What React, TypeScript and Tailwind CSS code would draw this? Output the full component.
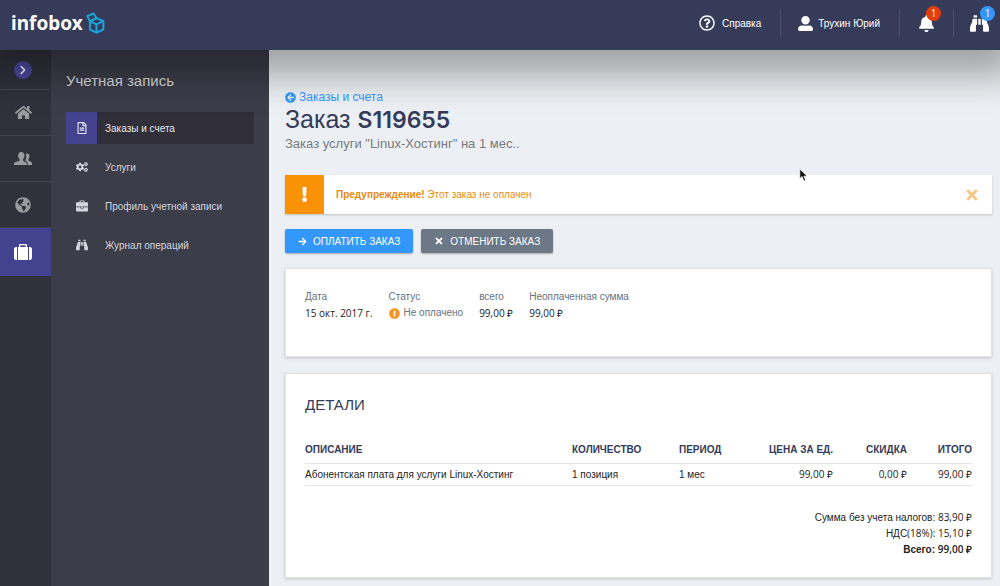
import React from "react"
import {
  FaArrowCircleLeft,
  FaArrowRight,
  FaBell,
  FaBinoculars,
  FaChevronRight,
  FaCogs,
  FaExclamation,
  FaExclamationCircle,
  FaGlobeAmericas,
  FaHome,
  FaRegFileAlt,
  FaRegQuestionCircle,
  FaTimes,
  FaUserAlt,
} from "react-icons/fa"

type IconProps = { className?: string }

const UsersIcon = ({ className }: IconProps) => (
  <svg viewBox="0 0 18 14" className={className} fill="currentColor">
    <path d="M13 1.500c1.700 0 2.600 1.200 2.500 2.900-.1 1.300-.6 2.100-1.100 2.700v1.400l2.600 1.300c.7.400 1 .9 1 1.700V13h-4.500v-1.800c0-1-.5-1.700-1.400-2.200l-1-.6c.8-1 1.200-2.300 1.200-3.800 0-1-.3-1.900-.8-2.600.4-.3.900-.5 1.500-.5Z" />
    <path d="M7.300 0c2 0 3.200 1.300 3.200 3.400 0 1.700-.7 3-1.500 3.800v1.500l2.800 1.500c.7.400 1 .9 1 1.700V13H0v-1.100c0-.8.300-1.300 1-1.700l4.600-1.500V7.200C4.700 6.400 4.100 5.100 4.100 3.400 4.100 1.300 5.300 0 7.300 0Z" />
  </svg>
)

const SuitcaseIcon = ({ className }: IconProps) => (
  <svg viewBox="0 0 18 16" className={className} fill="currentColor">
    <path d="M3 3v13h-.8A2.200 2.200 0 0 1 0 13.800V5.200A2.200 2.200 0 0 1 2.200 3ZM15 3h.8A2.200 2.200 0 0 1 18 5.200v8.600a2.200 2.200 0 0 1-2.200 2.200H15Z" />
    <path
      fillRule="evenodd"
      d="M4 3h1V1.200C5 .5 5.500 0 6.200 0h5.600c.7 0 1.200.5 1.200 1.200V3h1v13H4ZM6.300 3h5.400V1.300H6.300Z"
    />
  </svg>
)

const BriefcaseIcon = ({ className }: IconProps) => (
  <svg viewBox="0 0 14 13" className={className} fill="currentColor">
    <path
      fillRule="evenodd"
      d="M4 2V1c0-.5.4-1 1-1h4c.6 0 1 .5 1 1v1h2.700C13.500 2 14 2.500 14 3.300V7H0V3.300C0 2.500.5 2 1.300 2ZM5.200 2h3.600v-.9H5.200Z"
    />
    <path d="M0 8h5v1.500h4V8h6-1v3.700c0 .8-.5 1.300-1.300 1.300H1.300C.5 13 0 12.500 0 11.700ZM6 7.500h2v1.200H6Z" />
  </svg>
)

const railItems = [
  { label: "Главная", icon: FaHome, active: false, size: "size-[17px]" },
  { label: "Пользователи", icon: UsersIcon, active: false, size: "h-[14px] w-[18px]" },
  { label: "Домены", icon: FaGlobeAmericas, active: false, size: "size-4" },
  { label: "Учетная запись", icon: SuitcaseIcon, active: true, size: "h-4 w-[18px]" },
]

const menuItems = [
  { label: "Заказы и счета", icon: FaRegFileAlt, active: true },
  { label: "Услуги", icon: FaCogs, active: false },
  { label: "Профиль учетной записи", icon: BriefcaseIcon, active: false },
  { label: "Журнал операций", icon: FaBinoculars, active: false },
]

const Logo = () => (
  <a href="#" className="flex items-center gap-[3px] text-white">
    <span className="font-['Noto_Sans',sans-serif] text-[19px] leading-7 font-bold">infobox</span>
    <svg
      viewBox="0 0 58 66"
      className="h-[22px] w-[19px]"
      fill="none"
      stroke="#18a5dc"
      strokeWidth="6"
      strokeLinejoin="round"
    >
      <path d="M32 18 53 27 53 53 32 62 12 53 12 28Z" />
      <path d="M12 28 32 37 53 27M32 37V62" />
      <path d="M12 28 4 12 23 4 32 18Z" />
    </svg>
  </a>
)

const Header = () => (
  <header className="relative z-10 flex h-[50px] shrink-0 items-center justify-between bg-[#353b59] pb-1 pl-[11px] text-[10px] text-white shadow-[0_10px_36px_16px_rgba(0,0,0,0.32)]">
    <Logo />
    <div className="flex h-7 items-center">
      <a href="#" className="flex items-center gap-[7px] pr-[19px]">
        <FaRegQuestionCircle className="size-4" />
        Справка
      </a>
      <a href="#" className="flex h-full items-center gap-[5px] border-l border-[#4b5170] pr-[19px] pl-[17px]">
        <FaUserAlt className="size-[15px]" />
        Трухин Юрий
      </a>
      <button aria-label="Уведомления" className="relative h-full border-l border-[#4b5170] px-[18px]">
        <FaBell className="size-[17px]" />
        <span className="absolute -top-[3px] left-[26px] flex size-[15px] items-center justify-center rounded-full bg-[#e43c0b] font-['Open_Sans',sans-serif] text-[10px]">
          1
        </span>
      </button>
      <button aria-label="Журнал операций" className="relative h-full border-l border-[#4b5170] pr-[11px] pl-4">
        <FaBinoculars className="size-[19px]" />
        <span className="absolute -top-[3px] left-[26px] flex size-[15px] items-center justify-center rounded-full bg-[#3397fb] font-['Open_Sans',sans-serif] text-[10px]">
          1
        </span>
      </button>
    </div>
  </header>
)

const Rail = () => (
  <nav className="w-[51px] shrink-0 bg-[#2f313b] text-[#9a9ba0]">
    <div className="flex h-10 items-center justify-center border-b border-[#42444d] pr-[5px]">
      <button
        aria-label="Развернуть меню"
        className="flex size-[18px] items-center justify-center rounded-full bg-[#4a49a0] text-white"
      >
        <FaChevronRight className="size-[10px]" />
      </button>
    </div>
    {railItems.map(({ label, icon: Icon, active, size }) => (
      <a
        key={label}
        href="#"
        aria-label={label}
        className={
          active
            ? "flex h-12 items-center justify-center bg-[#42428e] pr-[5px] text-white"
            : "flex h-[46px] items-center justify-center border-b border-[#42444d] pr-[5px]"
        }
      >
        <Icon className={size} />
      </a>
    ))}
  </nav>
)

const Sidebar = () => (
  <aside className="w-[218px] shrink-0 bg-[#3b3d49] px-[15px] pt-5">
    <h2 className="text-[15px] leading-[22px] text-[#d6d7da]">Учетная запись</h2>
    <ul className="mt-5 space-y-[7px]">
      {menuItems.map(({ label, icon: Icon, active }) => (
        <li key={label}>
          <a
            href="#"
            className={
              active
                ? "flex h-8 items-center bg-[#302f39] text-[10px] text-[#e4e4ea]"
                : "flex h-8 items-center text-[10px] text-[#d6d6de]"
            }
          >
            <span
              className={
                active
                  ? "mr-2 flex h-full w-[31px] items-center justify-center bg-[#42428e]"
                  : "mr-2 flex h-full w-[31px] items-center justify-center"
              }
            >
              <Icon className="size-3" />
            </span>
            {label}
          </a>
        </li>
      ))}
    </ul>
  </aside>
)

const Warning = () => (
  <div
    role="alert"
    className="mt-[21px] flex h-[39px] items-center bg-white text-[10px] text-[#e8890f] shadow-[0_1px_2px_rgba(0,0,0,0.2)]"
  >
    <span className="flex h-full w-[39px] items-center justify-center bg-[#fb9104] text-white">
      <FaExclamation className="size-[15px]" />
    </span>
    <p className="flex-1 pl-3">
      <b>Предупреждение!</b> Этот заказ не оплачен
    </p>
    <button aria-label="Закрыть" className="px-3 text-[#f7c788]">
      <FaTimes className="size-4" />
    </button>
  </div>
)

const Summary = () => (
  <section className="mt-[15px] border border-[#dfe3e8] bg-white px-[19px] pt-5 pb-[35px] text-[10px] shadow-[0_1px_3px_rgba(0,0,0,0.18)]">
    <dl className="flex gap-4 leading-4 text-[#66717d]">
      <div>
        <dt>Дата</dt>
        <dd className="font-['Open_Sans',sans-serif] text-[#222]">15 окт. 2017 г.</dd>
      </div>
      <div>
        <dt>Статус</dt>
        <dd className="flex items-center gap-1">
          <FaExclamationCircle className="size-[11px] text-[#f7931e]" />
          Не оплачено
        </dd>
      </div>
      <div>
        <dt>всего</dt>
        <dd className="font-['Open_Sans',sans-serif] text-[#222]">99,00 ₽</dd>
      </div>
      <div>
        <dt>Неоплаченная сумма</dt>
        <dd className="font-['Open_Sans',sans-serif] text-[#222]">99,00 ₽</dd>
      </div>
    </dl>
  </section>
)

const Details = () => (
  <section className="mt-4 border border-[#dfe3e8] bg-white px-[19px] pt-5 pb-[19px] text-[10px] text-[#222] shadow-[0_1px_3px_rgba(0,0,0,0.18)]">
    <h2 className="text-[15px] leading-[22px] text-[#353b59]">ДЕТАЛИ</h2>
    <table className="mt-5 w-full table-fixed">
      <thead>
        <tr className="h-[27px] border-b border-[#e3e6ea] text-left text-[#353b59]">
          <th>ОПИСАНИЕ</th>
          <th className="w-[107px]">КОЛИЧЕСТВО</th>
          <th className="w-[67px]">ПЕРИОД</th>
          <th className="w-[87px] text-right">ЦЕНА ЗА ЕД.</th>
          <th className="w-[74px] text-right">СКИДКА</th>
          <th className="w-[65px] text-right">ИТОГО</th>
        </tr>
      </thead>
      <tbody>
        <tr className="h-[22px] border-b border-[#e3e6ea]">
          <td>Абонентская плата для услуги Linux-Хостинг</td>
          <td>1 позиция</td>
          <td>1 мес</td>
          <td className="text-right font-['Open_Sans',sans-serif]">99,00 ₽</td>
          <td className="text-right font-['Open_Sans',sans-serif]">0,00 ₽</td>
          <td className="text-right font-['Open_Sans',sans-serif]">99,00 ₽</td>
        </tr>
      </tbody>
    </table>
    <div className="mt-6 text-right leading-4">
      <p>
        Сумма без учета налогов: <span className="font-['Open_Sans',sans-serif] leading-none">83,90 ₽</span>
      </p>
      <p>
        НДС<span className="font-['Open_Sans',sans-serif] leading-none">(18%): 15,10 ₽</span>
      </p>
      <p className="font-bold">
        Всего: <span className="font-['Open_Sans',sans-serif] leading-none font-semibold">99,00 ₽</span>
      </p>
    </div>
  </section>
)

const Cursor = () => (
  <svg viewBox="0 0 12 18" className="pointer-events-none absolute top-[168px] left-[79.9%] z-20 h-[14px] w-[9px]">
    <path d="M1 1V14L4 11 6.500 17 9 16 6.500 10.500H11Z" fill="#111" stroke="#fff" strokeWidth="1" />
  </svg>
)

const App = () => (
  <div className="relative flex min-h-screen flex-col overflow-hidden bg-[#ecf0f4] font-['Liberation_Sans',Arial,sans-serif]">
    <Header />
    <div className="flex flex-1">
      <Rail />
      <Sidebar />
      <main className="min-w-0 flex-1 pt-[39px] pr-2 pb-2 pl-4">
        <a href="#" className="flex items-center gap-[3px] text-[12px] leading-4 text-[#3397fb]">
          <FaArrowCircleLeft className="size-[11px]" />
          Заказы и счета
        </a>
        <h1 className="text-[25px] leading-7 text-[#353b59]">
          Заказ <span className="font-['Inter',sans-serif] text-[23px] font-semibold">S119655</span>
        </h1>
        <p className="text-[13px] leading-5 text-[#777b80]">Заказ услуги "Linux-Хостинг" на 1 мес..</p>
        <Warning />
        <div className="mt-[15px] flex gap-2 text-[10px] text-white">
          <button className="flex h-6 items-center gap-[6px] rounded-[2px] bg-[#3397fb] px-[13px] shadow-[0_1px_2px_rgba(0,0,0,0.3)]">
            <FaArrowRight className="size-[9px]" />
            ОПЛАТИТЬ ЗАКАЗ
          </button>
          <button className="flex h-6 items-center gap-[6px] rounded-[2px] bg-[#6c7885] px-[13px] shadow-[0_1px_2px_rgba(0,0,0,0.3)]">
            <FaTimes className="size-[10px]" />
            ОТМЕНИТЬ ЗАКАЗ
          </button>
        </div>
        <Summary />
        <Details />
      </main>
    </div>
    <Cursor />
  </div>
)

export default App
